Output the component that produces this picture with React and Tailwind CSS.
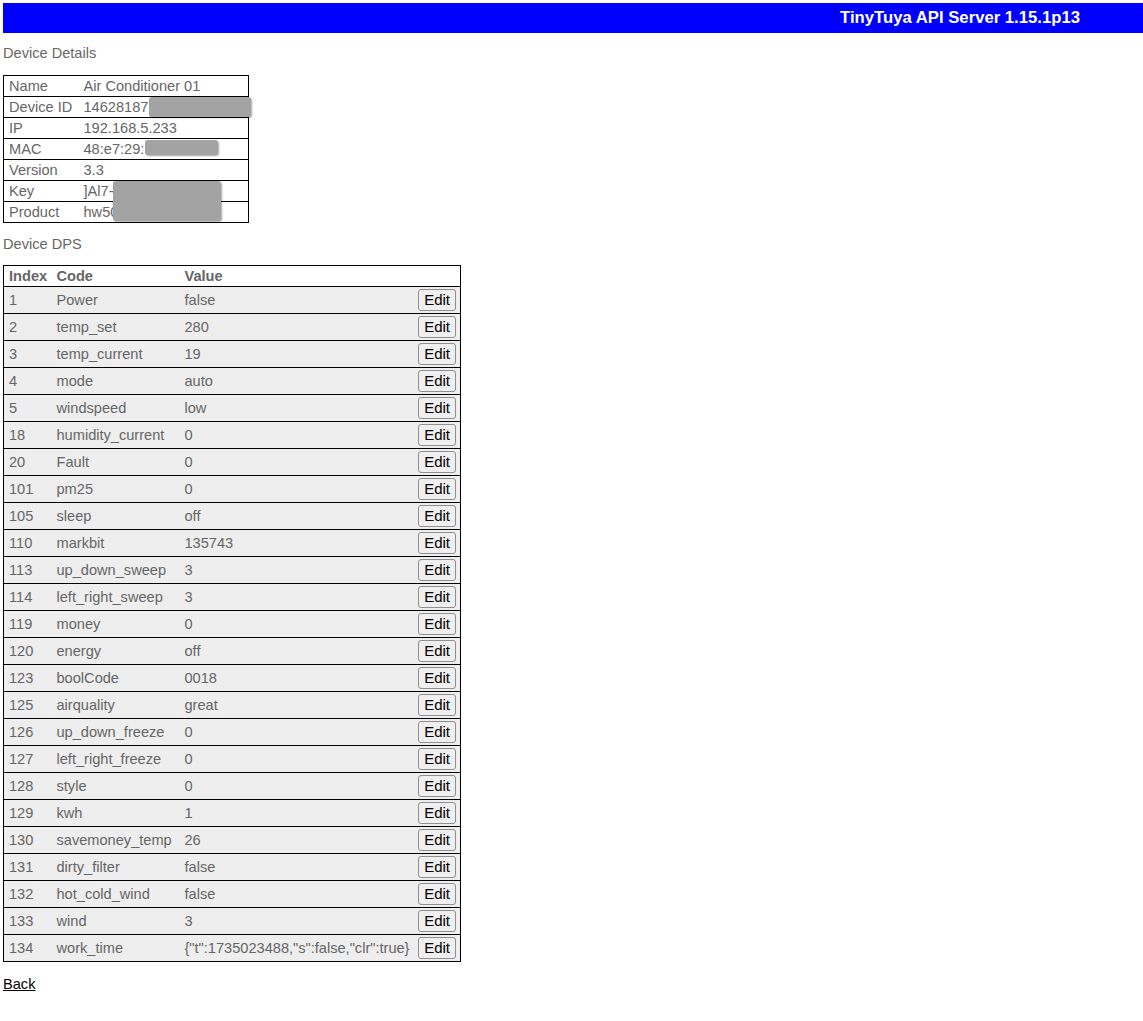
import React from "react";

const details = [
  ["Name", "Air Conditioner 01"],
  ["Device ID", "14628187"],
  ["IP", "192.168.5.233"],
  ["MAC", "48:e7:29:"],
  ["Version", "3.3"],
  ["Key", "]Al7-"],
  ["Product", "hw50"],
];

const dps = [
  ["1", "Power", "false"],
  ["2", "temp_set", "280"],
  ["3", "temp_current", "19"],
  ["4", "mode", "auto"],
  ["5", "windspeed", "low"],
  ["18", "humidity_current", "0"],
  ["20", "Fault", "0"],
  ["101", "pm25", "0"],
  ["105", "sleep", "off"],
  ["110", "markbit", "135743"],
  ["113", "up_down_sweep", "3"],
  ["114", "left_right_sweep", "3"],
  ["119", "money", "0"],
  ["120", "energy", "off"],
  ["123", "boolCode", "0018"],
  ["125", "airquality", "great"],
  ["126", "up_down_freeze", "0"],
  ["127", "left_right_freeze", "0"],
  ["128", "style", "0"],
  ["129", "kwh", "1"],
  ["130", "savemoney_temp", "26"],
  ["131", "dirty_filter", "false"],
  ["132", "hot_cold_wind", "false"],
  ["133", "wind", "3"],
  ["134", "work_time", '{"t":1735023488,"s":false,"clr":true}'],
];

// blurred-out secrets on top of the details table
const Mask = ({ className }) => (
  <div
    className={
      "absolute rounded-[3px] bg-[#a3a3a3] shadow-[1px_1px_2px_rgba(0,0,0,0.35)] " +
      className
    }
  />
);

export default function App() {
  return (
    <div
      className="min-h-[1021px] bg-white pl-[3px] pt-[3px] text-[14.6px] text-[#666]"
      style={{ fontFamily: '"Liberation Sans", Arial, sans-serif' }}
    >
      <div className="flex h-[30px] items-center justify-end bg-[#0000ff] pr-[63px]">
        <span className="text-[16.7px] font-bold text-white">
          TinyTuya API Server 1.15.1p13
        </span>
      </div>

      <div className="mt-[12px] leading-[17px]">Device Details</div>

      <div className="relative mt-[13px] w-[246px]">
        <table className="w-[246px] border-collapse border border-black bg-white">
          <tbody>
            {details.map(([label, value]) => (
              <tr key={label} className="h-[21px] border-b border-black">
                <td className="w-[80px] py-0 pl-[5px] pr-0 leading-[20px]">{label}</td>
                <td className="py-0 pl-0 pr-[5px] leading-[20px]">{value}</td>
              </tr>
            ))}
          </tbody>
        </table>
        <Mask className="left-[146px] top-[22px] h-[20px] w-[102px]" />
        <Mask className="left-[142px] top-[65px] h-[15px] w-[73px]" />
        <Mask className="left-[110px] top-[106px] h-[40px] w-[108px]" />
      </div>

      <div className="mt-[13px] leading-[17px]">Device DPS</div>

      <table className="mt-[12px] w-[458px] table-fixed border-collapse border border-black">
        <colgroup>
          <col className="w-[48px]" />
          <col className="w-[128px]" />
          <col />
          <col className="w-[46px]" />
        </colgroup>
        <thead>
          <tr className="h-[21px] border-b border-black bg-white text-left">
            <th className="py-0 pl-[5px] font-bold leading-[20px]">Index</th>
            <th className="py-0 pl-[5px] font-bold leading-[20px]">Code</th>
            <th className="py-0 pl-[5px] font-bold leading-[20px]">Value</th>
            <th />
          </tr>
        </thead>
        <tbody>
          {dps.map(([idx, code, value]) => (
            <tr key={idx} className="h-[27px] border-b border-black bg-[#eeeeee]">
              <td className="py-0 pl-[5px] leading-[26px]">{idx}</td>
              <td className="whitespace-nowrap py-0 pl-[5px] leading-[26px]">{code}</td>
              <td className="whitespace-nowrap py-0 pl-[5px] leading-[26px]">{value}</td>
              <td className="py-0 pr-[4px] text-right">
                <button className="h-[22px] rounded-[3px] border border-[#8f8f8f] bg-[#efefef] px-[5px] align-middle text-[15px] leading-[18px] text-black">
                  Edit
                </button>
              </td>
            </tr>
          ))}
        </tbody>
      </table>

      <div className="mt-[14px] leading-[17px]">
        <a href="#" className="text-black underline">
          Back
        </a>
      </div>
    </div>
  );
}
